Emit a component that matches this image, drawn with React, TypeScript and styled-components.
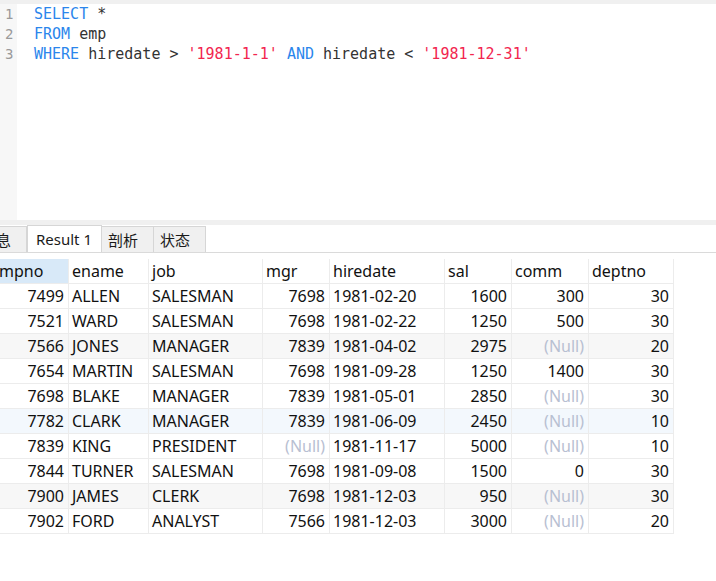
import React from 'react'
import styled, { createGlobalStyle } from 'styled-components'

const GlobalStyle = createGlobalStyle`
  html, body {
    margin: 0;
    padding: 0;
    background: #fff;
  }
  body {
    font-family: "Noto Sans", "Noto Sans CJK SC", sans-serif;
    color: #1a1a1a;
    width: 716px;
    height: 581px;
    overflow: hidden;
  }
`

const TopBand = styled.div`
  height: 4px;
  background: #f0f0f0;
`

const Editor = styled.div`
  display: flex;
  height: 216px;
`

const Gutter = styled.div`
  width: 17px;
  background: #f7f7f7;
  font-family: "DejaVu Sans Mono", monospace;
  font-size: 14px;
  line-height: 20px;
  color: #9a9a9a;
  padding-left: 5px;
  box-sizing: border-box;
`

const Code = styled.div`
  padding-left: 17px;
  font-family: "DejaVu Sans Mono", monospace;
  font-size: 15px;
  line-height: 20px;
  color: #333;
  white-space: pre;
`

const Kw = styled.span`
  color: #2b86ec;
`

const Str = styled.span`
  color: #f2264f;
`

const Splitter = styled.div`
  height: 5px;
  background: #f0f0f0;
`

const TabBar = styled.div`
  display: flex;
  height: 27px;
  border-bottom: 1px solid #dadada;
  overflow: hidden;
`

const Tab = styled.div<{ $active?: boolean; $offset?: number }>`
  min-width: 52px;
  box-sizing: border-box;
  padding: 0 9px 0 ${(p) => (p.$active ? 8 : 6)}px;
  margin-left: ${(p) => p.$offset ?? 0}px;
  font-size: 15px;
  line-height: 26px;
  border: 1px solid #d6d6d6;
  border-left-width: ${(p) => (p.$active ? 1 : 0)}px;
  border-bottom: none;
  background: ${(p) => (p.$active ? '#fff' : '#f0f0f0')};
  margin-top: ${(p) => (p.$active ? 0 : 1)}px;
  height: ${(p) => (p.$active ? 28 : 26)}px;
  white-space: nowrap;
  flex-shrink: 0;
`

const Grid = styled.div`
  margin-top: 6px;
  overflow: hidden;
`

// first column is scrolled partly out of view, as in the grid of the reference
const cols = '82px 80px 114px 67px 115px 67px 77px 85px'

const Row = styled.div<{ $bg?: string }>`
  display: grid;
  grid-template-columns: ${cols};
  margin-left: -13px;
  width: 687px;
  height: 25px;
  background: ${(p) => p.$bg ?? '#fff'};
`

const Cell = styled.div<{ $num?: boolean; $null?: boolean; $sel?: boolean }>`
  box-sizing: border-box;
  border-right: 1px solid #ececec;
  border-bottom: 1px solid #ececec;
  padding: 0 ${(p) => (p.$num ? 4 : 2)}px 0 ${(p) => (p.$num ? 2 : 3)}px;
  font-size: 16px;
  line-height: 24px;
  text-align: ${(p) => (p.$num ? 'right' : 'left')};
  color: ${(p) => (p.$null ? '#b8c0d2' : '#111')};
  background: ${(p) => (p.$sel ? '#d8e9f8' : 'transparent')};
  white-space: nowrap;
  overflow: hidden;
`

const headers = ['empno', 'ename', 'job', 'mgr', 'hiredate', 'sal', 'comm', 'deptno']
const numeric = [true, false, false, true, false, true, true, true]

const data: (string | null)[][] = [
  ['7499', 'ALLEN', 'SALESMAN', '7698', '1981-02-20', '1600', '300', '30'],
  ['7521', 'WARD', 'SALESMAN', '7698', '1981-02-22', '1250', '500', '30'],
  ['7566', 'JONES', 'MANAGER', '7839', '1981-04-02', '2975', null, '20'],
  ['7654', 'MARTIN', 'SALESMAN', '7698', '1981-09-28', '1250', '1400', '30'],
  ['7698', 'BLAKE', 'MANAGER', '7839', '1981-05-01', '2850', null, '30'],
  ['7782', 'CLARK', 'MANAGER', '7839', '1981-06-09', '2450', null, '10'],
  ['7839', 'KING', 'PRESIDENT', null, '1981-11-17', '5000', null, '10'],
  ['7844', 'TURNER', 'SALESMAN', '7698', '1981-09-08', '1500', '0', '30'],
  ['7900', 'JAMES', 'CLERK', '7698', '1981-12-03', '950', null, '30'],
  ['7902', 'FORD', 'ANALYST', '7566', '1981-12-03', '3000', null, '20'],
]

const rowBg = (i: number) => {
  if (i === 2 || i === 8) return '#f7f7f7'
  if (i === 5) return '#f3f8fd'
  return '#fff'
}

const App = () => {
  return (
    <>
      <GlobalStyle />
      <TopBand />
      <Editor>
        <Gutter>
          <div>1</div>
          <div>2</div>
          <div>3</div>
        </Gutter>
        <Code>
          <div>
            <Kw>SELECT</Kw> *
          </div>
          <div>
            <Kw>FROM</Kw> emp
          </div>
          <div>
            <Kw>WHERE</Kw> hiredate &gt; <Str>'1981-1-1'</Str> <Kw>AND</Kw> hiredate &lt;{' '}
            <Str>'1981-12-31'</Str>
          </div>
        </Code>
      </Editor>
      <Splitter />
      <TabBar>
        <Tab $offset={-25}>信息</Tab>
        <Tab $active>Result 1</Tab>
        <Tab>剖析</Tab>
        <Tab>状态</Tab>
      </TabBar>
      <Grid>
        <Row>
          {headers.map((h, i) => (
            <Cell key={h} $sel={i === 0}>
              {h}
            </Cell>
          ))}
        </Row>
        {data.map((r, i) => (
          <Row key={i} $bg={rowBg(i)}>
            {r.map((v, j) => (
              <Cell key={j} $num={numeric[j]} $null={v === null}>
                {v ?? '(Null)'}
              </Cell>
            ))}
          </Row>
        ))}
      </Grid>
    </>
  )
}

export default App
